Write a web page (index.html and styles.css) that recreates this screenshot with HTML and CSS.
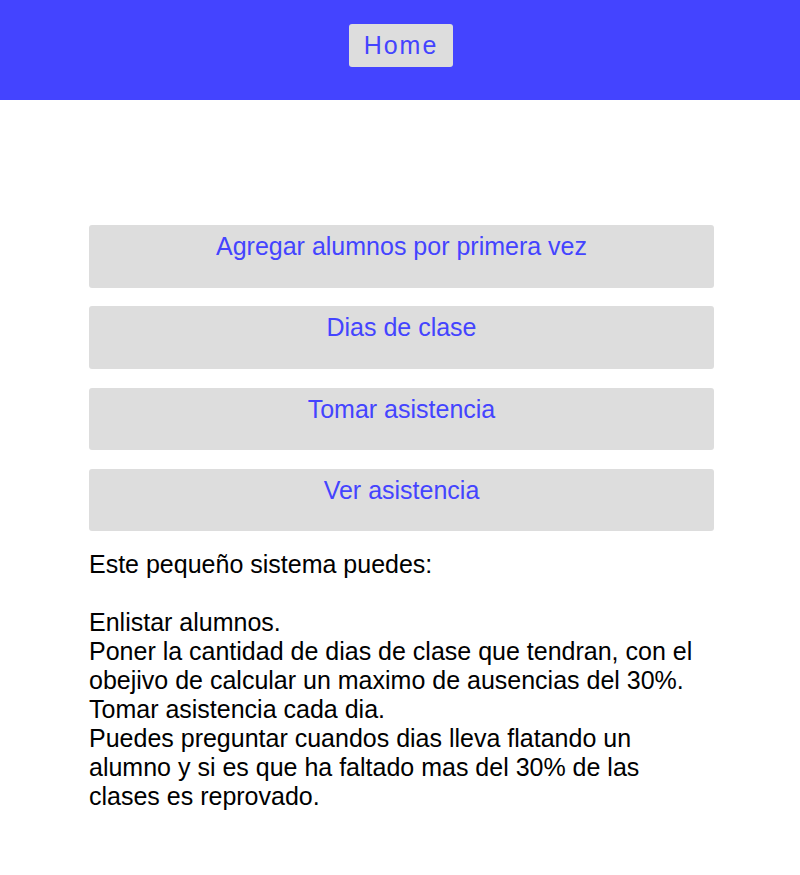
FILE: index.html
```html
<!DOCTYPE html>
<html>
<head>
<meta charset="utf-8">
<link rel="stylesheet" href="styles.css">
</head>
<body>
<header class="top">
  <a class="home" href="#">Home</a>
</header>
<main class="main">
  <nav class="menu">
    <a class="item" href="#">Agregar alumnos por primera vez</a>
    <a class="item" href="#">Dias de clase</a>
    <a class="item" href="#">Tomar asistencia</a>
    <a class="item" href="#">Ver asistencia</a>
  </nav>
  <p class="info">Este pequeño sistema puedes:<br><br>Enlistar alumnos.<br>Poner la cantidad de dias de clase que tendran, con el obejivo de calcular un maximo de ausencias del 30%.<br>Tomar asistencia cada dia.<br>Puedes preguntar cuandos dias lleva flatando un alumno y si es que ha faltado mas del 30% de las clases es reprovado.</p>
</main>
</body>
</html>
```
FILE: styles.css
```css
html, body { margin: 0; padding: 0; }
body { font-family: "Liberation Sans", Arial, sans-serif; background: #fff; }
.top {
  height: 100px;
  background: #4444ff;
  display: flex;
  justify-content: center;
  align-items: flex-start;
  padding-left: 2px;
  box-sizing: border-box;
}
.home {
  margin-top: 24px;
  width: 104px;
  height: 43px;
  box-sizing: border-box;
  background: #dddddd;
  border-radius: 3px;
  color: #4444ff;
  text-decoration: none;
  font-size: 25px;
  letter-spacing: 2px;
  display: flex;
  align-items: center;
  justify-content: center;
  padding-left: 0;
}
.main {
  width: 625px;
  margin-left: calc(50% - 311px);
  padding-top: 125px;
}
.menu { display: flex; flex-direction: column; gap: 18.8px; }
.item {
  display: block;
  height: 62.5px;
  box-sizing: border-box;
  padding-top: 7px;
  background: #dddddd;
  border-radius: 3px;
  color: #4444ff;
  text-decoration: none;
  text-align: center;
  font-size: 25px;
}
.info {
  margin: 19px 0 0;
  font-size: 25px;
  color: #000;
}
```
